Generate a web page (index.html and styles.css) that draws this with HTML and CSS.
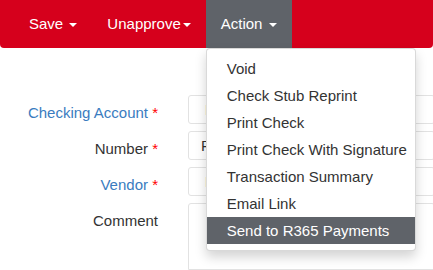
FILE: index.html
```html
<!DOCTYPE html>
<html>
<head>
	<title>Check</title>
	<link rel="stylesheet" href="styles.css">
</head>
<body>
	<nav class="navbar">
		<ul class="nav">
			<li><a href="#">Save <span class="caret"></span></a></li>
			<li><a href="#">Unapprove<span class="caret"></span></a></li>
			<li class="open">
				<a href="#">Action <span class="caret"></span></a>
				<ul class="dropdown-menu">
					<li><a href="#">Void</a></li>
					<li><a href="#">Check Stub Reprint</a></li>
					<li><a href="#">Print Check</a></li>
					<li><a href="#">Print Check With Signature</a></li>
					<li><a href="#">Transaction Summary</a></li>
					<li><a href="#">Email Link</a></li>
					<li class="active"><a href="#">Send to R365 Payments</a></li>
				</ul>
			</li>
		</ul>
	</nav>

	<form class="form" action="#">
		<label class="link" for="checking-account">Checking Account <span class="req">*</span></label>
		<div class="control select" id="checking-account"><span class="pick">Bank</span></div>

		<label for="number">Number <span class="req">*</span></label>
		<input class="control" id="number" type="text" value="Pending">

		<label class="link" for="vendor">Vendor <span class="req">*</span></label>
		<div class="control select" id="vendor"><span class="pick">Business</span></div>

		<label for="comment">Comment</label>
		<textarea class="control" id="comment"></textarea>
	</form>
</body>
</html>
```

FILE: styles.css
```css
body {
	margin: 0;
	padding: 0;
	font-family: 'Liberation Sans', Arial, sans-serif;
	font-size: 15px;
	line-height: 1.4;
	color: #333;
	background-color: white;
	overflow: hidden;
}
ul {
	margin: 0;
	padding: 0;
	list-style: none;
}
a {
	text-decoration: none;
}
.navbar {
	height: 48px;
	background-color: #d6001c;
	border-radius: 0 0 4px 4px;
}
.nav {
	display: flex;
	padding-left: 14px;
}
.nav > li {
	position: relative;
}
.nav > li > a {
	display: block;
	padding: 0 15px;
	line-height: 48px;
	color: white;
}
.nav > li.open > a {
	background-color: #5f6369;
}
.caret {
	display: inline-block;
	width: 0;
	height: 0;
	margin-left: 2px;
	vertical-align: middle;
	border-top: 4px solid;
	border-left: 4px solid transparent;
	border-right: 4px solid transparent;
}
.dropdown-menu {
	position: absolute;
	top: 100%;
	left: 0;
	z-index: 10;
	padding: 6px 0;
	background-color: white;
	border: 1px solid rgba(0,0,0,.15);
	border-radius: 4px;
	box-shadow: 0 6px 12px rgba(0,0,0,.175);
}
.dropdown-menu a {
	display: block;
	padding: 3px 8px 3px 20px;
	line-height: 21px;
	color: #333;
	white-space: nowrap;
}
.dropdown-menu .active a {
	color: white;
	background-color: #5f6369;
}
.form {
	display: grid;
	grid-template-columns: 158px 247px;
	align-content: start;
	column-gap: 30px;
	row-gap: 7px;
	padding-top: 47px;
	overflow: hidden;
}
.form label {
	padding-top: 7px;
	line-height: 21px;
	text-align: right;
	color: #333;
}
.form label.link {
	color: #3a7cc0;
}
.req {
	color: #f00;
}
.control {
	box-sizing: border-box;
	height: 29px;
	margin: 0;
	padding: 0 12px;
	font-family: inherit;
	font-size: 15px;
	line-height: 27px;
	color: #333;
	background-color: white;
	border: 1px solid #e2e2e2;
	border-radius: 3px;
}
.select {
	padding-left: 16px;
}
.pick {
	color: #a0522d;
}
textarea.control {
	height: 67px;
	border-bottom-left-radius: 0;
	border-bottom-right-radius: 0;
	resize: none;
}
```
